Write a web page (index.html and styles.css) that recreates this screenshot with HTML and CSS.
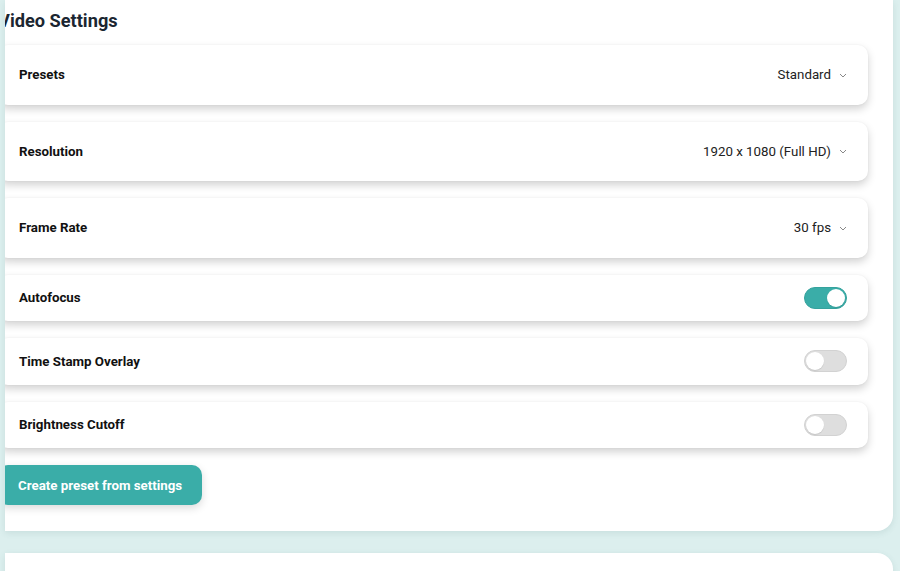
FILE: index.html
```html
<!DOCTYPE html>
<html>
<head>
<meta charset="utf-8">
<link rel="stylesheet" href="styles.css">
</head>
<body>
<div class="page">
  <section class="panel">
    <div class="content">
      <h2 class="title">Video Settings</h2>
      <div class="card card-select">
        <span class="label">Presets</span>
        <span class="value">Standard <svg class="chev" width="8" height="5" viewBox="0 0 8 5"><polyline points="1,1 4,4 7,1" fill="none" stroke="#888" stroke-width="1"/></svg></span>
      </div>
      <div class="card card-select">
        <span class="label">Resolution</span>
        <span class="value">1920 x 1080 (Full HD) <svg class="chev" width="8" height="5" viewBox="0 0 8 5"><polyline points="1,1 4,4 7,1" fill="none" stroke="#888" stroke-width="1"/></svg></span>
      </div>
      <div class="card card-select">
        <span class="label">Frame Rate</span>
        <span class="value">30 fps <svg class="chev" width="8" height="5" viewBox="0 0 8 5"><polyline points="1,1 4,4 7,1" fill="none" stroke="#888" stroke-width="1"/></svg></span>
      </div>
      <div class="card card-toggle">
        <span class="label">Autofocus</span>
        <span class="toggle on"><span class="knob"></span></span>
      </div>
      <div class="card card-toggle">
        <span class="label">Time Stamp Overlay</span>
        <span class="toggle"><span class="knob"></span></span>
      </div>
      <div class="card card-toggle">
        <span class="label">Brightness Cutoff</span>
        <span class="toggle"><span class="knob"></span></span>
      </div>
      <button class="btn">Create preset from settings</button>
    </div>
  </section>
  <section class="panel panel-next"></section>
</div>
</body>
</html>
```

FILE: styles.css
```css
* { box-sizing: border-box; }
html, body { margin: 0; padding: 0; }
body {
  background: #dcefee;
  font-family: Roboto, "Liberation Sans", sans-serif;
  overflow: hidden;
  height: 571px;
}
.page {
  padding-left: 5px;
  width: 893px;
  display: flex;
  flex-direction: column;
  gap: 22px;
}
.panel {
  background: #fff;
  border-radius: 0 0 16px 0;
  overflow: hidden;
  padding: 0 25px 26px 0;
  box-shadow: 0 2px 6px rgba(60, 110, 110, 0.12);
}
.panel-next {
  border-radius: 0 16px 0 0;
  height: 60px;
  padding: 0;
}
.content {
  margin-left: -7px;
  display: flex;
  flex-direction: column;
  align-items: stretch;
}
.title {
  margin: 0;
  height: 45px;
  padding-top: 9px;
  font-size: 18.2px;
  line-height: 24px;
  font-weight: 700;
  color: #1b2631;
}
.card {
  background: #fff;
  border-radius: 10px;
  display: flex;
  align-items: center;
  justify-content: space-between;
  padding: 0 21px 0 21px;
  margin-bottom: 17px;
  box-shadow: 0 4px 8px rgba(0, 0, 0, 0.18), 0 0 2px rgba(0,0,0,0.05);
}
.card-select { height: 59.5px; }
.card-toggle { height: 46.5px; }
.label {
  font-size: 13.3px;
  font-weight: 700;
  color: #111;
}
.value {
  font-size: 13.3px;
  color: #222;
  display: flex;
  align-items: center;
  gap: 8px;
}
.chev { display: block; margin-top: 1px; }
.toggle {
  width: 43px;
  height: 22px;
  border-radius: 11px;
  background: #dedede;
  border: 1px solid #d2d2d2;
  position: relative;
  display: block;
}
.toggle .knob {
  position: absolute;
  top: 1px;
  left: 1px;
  width: 18px;
  height: 18px;
  border-radius: 50%;
  background: #fff;
  box-shadow: 0 1px 1px rgba(0,0,0,0.1);
}
.toggle.on {
  background: #3aada8;
  border-color: #35a29d;
}
.toggle.on .knob { left: 22px; }
.btn {
  align-self: flex-start;
  margin-top: 0;
  height: 40px;
  padding: 0 20px;
  border: none;
  border-radius: 10px;
  background: #3aada8;
  color: #fff;
  font-family: Roboto, "Liberation Sans", sans-serif;
  font-size: 13.3px;
  font-weight: 700;
  box-shadow: 0 3px 8px rgba(0,0,0,0.15);
}
```
